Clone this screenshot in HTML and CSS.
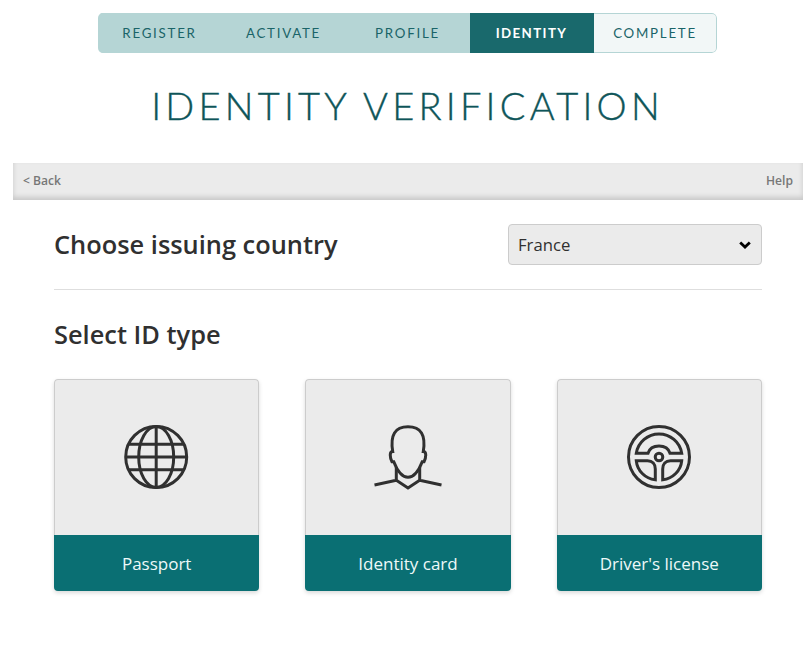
FILE: index.html
```html
<!DOCTYPE html>
<html lang="en">
<head>
    <meta charset="UTF-8">
    <meta name="viewport" content="width=device-width, initial-scale=1.0">
    <title>Identity Verification</title>
    <link rel="stylesheet" href="styles.css">
</head>
<body>
    <ol class="steps">
        <li class="step done">Register</li>
        <li class="step done">Activate</li>
        <li class="step done">Profile</li>
        <li class="step active">Identity</li>
        <li class="step">Complete</li>
    </ol>

    <h1>Identity Verification</h1>

    <div class="toolbar">
        <a href="#">&lt; Back</a>
        <a href="#">Help</a>
    </div>

    <div class="container">
        <div class="country">
            <h2>Choose issuing country</h2>
            <div class="select">
                <select id="country" name="country" aria-label="Issuing country">
                    <option>France</option>
                </select>
                <svg class="arrow" viewBox="0 0 12 8">
                    <path d="M1.2 1.4 L6 6 L10.8 1.4"/>
                </svg>
            </div>
        </div>

        <h2>Select ID type</h2>
        <div class="cards">
            <button type="button" class="card">
                <span class="icon">
                    <svg viewBox="0 0 70 70">
                        <circle cx="34.2" cy="35" r="30.5"/>
                        <ellipse cx="34.2" cy="35" rx="17.5" ry="30.5"/>
                        <path d="M34.2 4.5 V65.5 M4 35 H65 M7 22.2 H62 M7 47.8 H62"/>
                    </svg>
                </span>
                <span class="label">Passport</span>
            </button>
            <button type="button" class="card">
                <span class="icon">
                    <svg viewBox="0 0 70 70">
                        <path d="M19.7 29.5 C17 13 22 4.7 35 4.7 C48 4.7 53 13 50.3 29.5 C53.7 29.5 53.2 35.5 51 39.8 H49.2 C46.4 47 42.5 55.3 35 55.3 C27.5 55.3 23.6 47 20.8 39.8 H19 C16.8 35.5 16.3 29.5 19.7 29.5 Z"/>
                        <path d="M23.3 45 V58.3 L35 66 L46.7 58.3 V45 M1.5 63 L23.3 58.3 M68.5 63 L46.7 58.3"/>
                    </svg>
                </span>
                <span class="label">Identity card</span>
            </button>
            <button type="button" class="card">
                <span class="icon">
                    <svg viewBox="0 0 70 70">
                        <circle cx="35" cy="35" r="30.5"/>
                        <circle cx="35" cy="35" r="3.8"/>
                        <path d="M12.3 31.2 A23 23 0 0 1 57.7 31.2 H46 C44.5 26.5 40.5 24 35 24 C29.5 24 25.5 26.5 24 31.2 Z"/>
                        <path d="M12.3 38.8 H23.5 C28.5 38.8 31.3 42 31.3 47 V57.7 C21 56.5 13.2 48.5 12.3 38.8 Z"/>
                        <path d="M57.7 38.8 H46.5 C41.5 38.8 38.7 42 38.7 47 V57.7 C49 56.5 56.8 48.5 57.7 38.8 Z"/>
                    </svg>
                </span>
                <span class="label">Driver's license</span>
            </button>
        </div>
    </div>
</body>
</html>
```

FILE: styles.css
```css
* {
    box-sizing: border-box;
}
body {
    font-family: 'Open Sans', sans-serif;
    background-color: #fff;
    color: #303030;
    margin: 0;
    padding: 13px 6px 0 13px;
}
.steps {
    display: grid;
    grid-template-columns: repeat(4, 124px) 123px;
    width: 619px;
    height: 40px;
    margin: 0 0 0 85px;
    padding: 0;
    list-style: none;
    border-radius: 5px;
    overflow: hidden;
}
.step {
    border: 1px solid #b5d5d5;
    border-left: none;
    border-radius: 0 5px 5px 0;
    background-color: #f2f7f7;
    color: #1a6468;
    font-family: 'Lato', sans-serif;
    font-size: 13.3px;
    line-height: 38px;
    letter-spacing: 1.75px;
    text-align: center;
    text-transform: uppercase;
}
.step.done {
    background-color: #b5d5d5;
    border-radius: 0;
}
.step.active {
    background-color: #19696c;
    border-color: #19696c;
    border-radius: 0;
    color: #fff;
    font-weight: bold;
    letter-spacing: 1.4px;
}
h1 {
    margin: 28px 0 34px;
    padding-right: 1px;
    color: #0e5559;
    font-family: 'Lato', sans-serif;
    font-size: 38px;
    font-weight: 300;
    line-height: 48px;
    letter-spacing: 4.25px;
    text-align: center;
    text-transform: uppercase;
    white-space: nowrap;
    -webkit-text-stroke: 0.4px #0e5559;
}
.toolbar {
    display: flex;
    justify-content: space-between;
    align-items: center;
    height: 37px;
    padding: 0 10px 2px;
    background-color: #ebebeb;
    box-shadow: inset 0 -3px 5px rgba(0, 0, 0, 0.15);
}
.toolbar a {
    color: #777;
    font-size: 12.1px;
    font-weight: 600;
    text-decoration: none;
}
.container {
    padding: 24px 41px;
}
.country {
    display: flex;
    justify-content: space-between;
    align-items: flex-start;
    padding-bottom: 24px;
    margin-bottom: 24px;
    border-bottom: 1px solid #dedede;
}
h2 {
    margin: 0;
    font-size: 25.4px;
    font-weight: 600;
    line-height: 40px;
}
.select {
    position: relative;
    width: 254px;
    height: 41px;
}
.select select {
    appearance: none;
    width: 100%;
    height: 100%;
    padding: 0 9px;
    border: 1px solid #ccc;
    border-radius: 4px;
    background-color: #ebebeb;
    color: #303030;
    font-family: inherit;
    font-size: 16.7px;
}
.arrow {
    position: absolute;
    top: 17px;
    right: 11px;
    width: 12px;
    height: 8px;
    fill: none;
    stroke: #000;
    stroke-width: 2.8;
    pointer-events: none;
}
.cards {
    display: grid;
    grid-template-columns: repeat(3, 1fr);
    gap: 46px;
    margin-top: 25px;
}
.card {
    display: flex;
    flex-direction: column;
    height: 212px;
    padding: 0;
    border: none;
    border-radius: 4px;
    overflow: hidden;
    background-color: #ebebeb;
    box-shadow: 0 2px 4px rgba(0, 0, 0, 0.15);
    font-family: inherit;
    cursor: pointer;
}
.icon {
    display: flex;
    justify-content: center;
    align-items: center;
    width: 100%;
    height: 156px;
    padding-bottom: 2px;
    border: 1px solid #ccc;
    border-bottom: none;
    border-radius: 4px 4px 0 0;
}
.icon svg {
    width: 70px;
    height: 70px;
    fill: none;
    stroke: #303030;
    stroke-width: 3;
}
.label {
    width: 100%;
    height: 56px;
    background-color: #0a6f73;
    color: #eef9f9;
    font-size: 17px;
    line-height: 57px;
}
```
